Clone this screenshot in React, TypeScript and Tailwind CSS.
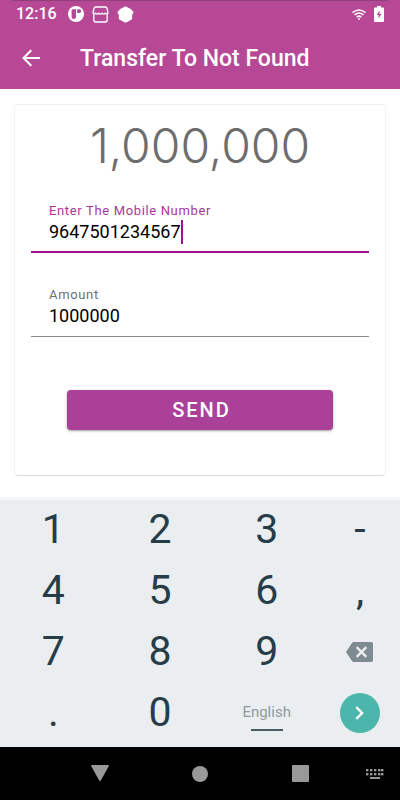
import { useState } from 'react'
import type { ReactNode } from 'react'

interface FieldProps {
  id: string
  label: string
  value: string
  active?: boolean
  onChange: (value: string) => void
}

function Field({ id, label, value, active, onChange }: FieldProps) {
  return (
    <div
      className={
        active
          ? 'h-[52px] px-[18px] border-b-2 border-[#9c138b]'
          : 'h-[52px] px-[18px] border-b border-[#8b8b8b]'
      }
    >
      <label
        htmlFor={id}
        className={
          active
            ? 'block text-[13px] leading-5 tracking-wider text-[#a8389b]'
            : 'block text-[13px] leading-5 tracking-wider text-[#6f6f6f]'
        }
      >
        {label}
      </label>
      <div className="flex h-[22px] items-center">
        <input
          id={id}
          type="text"
          inputMode="decimal"
          value={value}
          onChange={e => onChange(e.target.value)}
          className="[field-sizing:content] min-w-0 bg-transparent text-[18px] leading-[22px] text-black caret-[#9c138b] outline-none"
        />
        {active && <span className="h-6 w-[2px] bg-[#9c138b]" />}
      </div>
    </div>
  )
}

function Key({ label, children }: { label: string; children?: ReactNode }) {
  return (
    <button
      type="button"
      aria-label={label}
      className="flex h-[61px] items-center justify-center text-[41px] leading-[61px] text-[#263d47]"
    >
      {children ?? label}
    </button>
  )
}

function StatusBar() {
  return (
    <div className="flex h-[26px] items-center justify-between pl-4 pr-4 text-white">
      <div className="flex items-center gap-2">
        <span className="mr-[3px] text-base leading-5 font-medium">12:16</span>
        <svg width="16" height="16" viewBox="0 0 16 16">
          <circle cx="8" cy="8" r="8" fill="#fff" />
          <path d="M3.6 4.6Q3.6 3.2 5 3.2H8V11Q8 13 5.8 13Q3.6 13 3.6 11Z" fill="#b74896" />
          <path d="M9.2 3.2H11.3Q13.2 3.2 13.2 5.1Q13.2 7 11.3 7H9.2Z" fill="#b74896" />
        </svg>
        <svg width="17" height="17" viewBox="0 0 17 17" fill="none" stroke="#fff" strokeWidth="1.3">
          <path d="M3.5 1H13.5Q14.7 1 15 2.5L16 7Q15 8.8 13.3 7.2Q11.7 9 10 7.2Q8.5 9 6.8 7.2Q5.2 9 3.6 7.2Q2 8.8 1 7L2 2.5Q2.3 1 3.5 1Z" />
          <path d="M1.8 8.2V14Q1.8 16 3.8 16H13.2Q15.2 16 15.2 14V8.2" />
        </svg>
        <svg width="17" height="17" viewBox="0 0 17 17">
          <path
            d="M6.3 1.6L7.6 .5H9.4L10.7 1.6L13.8 3.1Q14.6 3.6 14.8 4.4L16.3 5.3V7.6L15.2 8.6V12.2Q15.2 13.3 14.2 13.8L9.7 16.2Q8.5 16.9 7.3 16.2L2.8 13.8Q1.8 13.3 1.8 12.2V8.6L.7 7.6V5.3L2.2 4.4Q2.4 3.6 3.2 3.1Z"
            fill="#fff"
          />
        </svg>
      </div>
      <div className="flex items-center gap-2">
        <svg width="14" height="11" viewBox="0 0 14 11" fill="none" stroke="#fff" strokeWidth="1.5">
          <path d="M.5 3.6Q7-1.6 13.5 3.6" />
          <path d="M2.6 5.9Q7 2.2 11.4 5.9" />
          <path d="M4.7 8.1Q7 6.2 9.3 8.1" />
          <circle cx="7" cy="10" r="0.9" fill="#fff" stroke="none" />
        </svg>
        <svg width="10" height="16" viewBox="0 0 10 16">
          <path d="M3 0H7V1.5H9Q10 1.5 10 2.5V15Q10 16 9 16H1Q0 16 0 15V2.5Q0 1.5 1 1.5H3Z" fill="#fff" />
          <path d="M5.5 4.5L2.8 9H4.6V12.5L7.4 8H5.5Z" fill="#b74896" />
        </svg>
      </div>
    </div>
  )
}

function Keypad() {
  return (
    <div className="border-t-[3px] border-[#f5f6f7] bg-[#ebeef1] pb-1">
      <div className="-mt-px grid grid-cols-[4fr_4fr_4fr_3fr]">
        <Key label="1" />
        <Key label="2" />
        <Key label="3" />
        <Key label="-" />
        <Key label="4" />
        <Key label="5" />
        <Key label="6" />
        <Key label="," />
        <Key label="7" />
        <Key label="8" />
        <Key label="9" />
        <Key label="Delete">
          <svg width="27" height="20" viewBox="0 0 27 20">
            <path d="M7.5 0H25Q27 0 27 2V18Q27 20 25 20H7.5Q6.5 20 6 19L0 10L6 1Q6.5 0 7.5 0Z" fill="#7f8b90" />
            <path d="M10.7 5.2L20.3 14.8M20.3 5.2L10.7 14.8" stroke="#ebeef1" strokeWidth="2.4" />
          </svg>
        </Key>
        <Key label="." />
        <Key label="0" />
        <Key label="English">
          <span className="flex flex-col items-center gap-[7px] pt-2">
            <span className="text-[15px] leading-5 text-[#8f9a9f]">English</span>
            <span className="h-[2px] w-8 bg-[#4a5d66]" />
          </span>
        </Key>
        <Key label="Next">
          <span className="flex size-10 items-center justify-center rounded-full bg-[#4db6ac]">
            <svg width="9" height="14" viewBox="0 0 9 14" fill="none" stroke="#fff" strokeWidth="2.4">
              <path d="M1.3 1.2L7.1 7L1.3 12.8" />
            </svg>
          </span>
        </Key>
      </div>
    </div>
  )
}

function NavBar() {
  return (
    <nav className="grid h-[53px] grid-cols-[3fr_2fr_2fr_1fr] items-center bg-black">
      <button type="button" aria-label="Back" className="flex justify-end pr-[41px]">
        <svg width="18" height="17" viewBox="0 0 18 17">
          <path d="M1 0H17Q18.3 0 17.7 1.2L9.8 15.5Q9 16.8 8.2 15.5L.3 1.2Q-.3 0 1 0Z" fill="#999" />
        </svg>
      </button>
      <button type="button" aria-label="Home" className="flex justify-center">
        <span className="size-4 rounded-full bg-[#999]" />
      </button>
      <button type="button" aria-label="Recent apps" className="flex justify-center">
        <span className="size-[17px] rounded-[1px] bg-[#999]" />
      </button>
      <button type="button" aria-label="Switch keyboard" className="flex justify-center">
        <svg width="18" height="10" viewBox="0 0 18 10" fill="#999">
          {[0, 4, 8, 12, 15].map(x => (
            <g key={x}>
              <rect x={x} y="0" width="2.4" height="2.4" />
              <rect x={x} y="4" width="2.4" height="2.4" />
            </g>
          ))}
          <rect x="4" y="8" width="10" height="2" />
        </svg>
      </button>
    </nav>
  )
}

export default function App() {
  const [mobile, setMobile] = useState('9647501234567')
  const [amount, setAmount] = useState('1000000')

  return (
    <div className="flex min-h-screen flex-col bg-white font-['Roboto',sans-serif]">
      <header className="bg-[#b74896] pb-px text-white">
        <div className="mx-3 h-px bg-[#8f4079]" />
        <StatusBar />
        <div className="flex h-[61px] items-center gap-[39px] pl-[22px]">
          <button type="button" aria-label="Back">
            <svg width="19" height="18" viewBox="0 0 19 18" fill="none" stroke="#fff" strokeWidth="2">
              <path d="M18 9H2M9.3 1.2L1.5 9L9.3 16.8" />
            </svg>
          </button>
          <h1 className="pt-[3px] text-[23px] leading-7 font-medium">Transfer To Not Found</h1>
        </div>
      </header>

      <main className="flex-1 px-[14px] pt-[15px] pb-[21px]">
        <form
          className="rounded border border-[#f1f1f1] border-b-[#dcdcdc] px-4 pt-[11px] pb-[45px]"
          onSubmit={e => e.preventDefault()}
        >
          <p className="text-center font-['Inter',sans-serif] text-[48px] leading-[60px] font-light text-[#6d6d6d]">
            1,000,000
          </p>
          <div className="mt-[25px] flex flex-col gap-8">
            <Field id="mobile" label="Enter The Mobile Number" value={mobile} active onChange={setMobile} />
            <Field id="amount" label="Amount" value={amount} onChange={setAmount} />
          </div>
          <div className="mt-[53px] px-9">
            <button
              type="submit"
              className="h-10 w-full rounded bg-[#ab4099] pl-[3px] text-xl font-medium tracking-widest text-white shadow-sm shadow-black/30"
            >
              SEND
            </button>
          </div>
        </form>
      </main>

      <Keypad />
      <NavBar />
    </div>
  )
}
